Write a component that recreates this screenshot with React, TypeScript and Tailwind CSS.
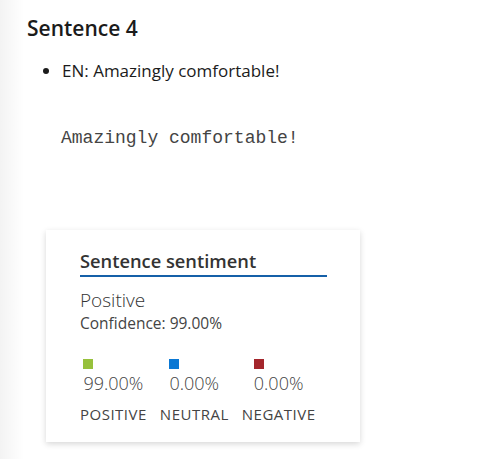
const ui = "font-['Open_Sans','Noto_Sans',sans-serif]";

function Score({ color, value, label }: { color: string; value: string; label: string }) {
  return (
    <div className="flex flex-col items-center">
      <div className="flex flex-col items-start">
        <div className={`w-[10px] h-[10px] ${color}`} />
        <div className="mt-[2px] text-[18px] leading-[24px] font-light text-[#444]">{value}</div>
      </div>
      <div className="mt-[9px] text-[15px] leading-[20px] tracking-[0.5px] text-[#444] uppercase">{label}</div>
    </div>
  );
}

export default function App() {
  return (
    <div className={`${ui} min-h-[459px] w-[495px] bg-white relative`}>
      <div className="absolute left-0 top-0 bottom-0 w-[24px] bg-gradient-to-r from-[#f3f3f3] to-white" />
      <div className="relative pl-[27px] pt-[14px]">
        <h2 className="text-[21px] leading-[28px] font-semibold text-[#1b1b1b]">Sentence 4</h2>
        <ul className="mt-[18px] pl-[35px] list-disc text-[17px] leading-[22px] text-[#1b1b1b]">
          <li>EN: Amazingly comfortable!</li>
        </ul>
        <pre className="mt-[44px] pl-[34px] font-['Liberation_Mono',monospace] text-[18px] leading-[24px] text-[#444]">
          Amazingly comfortable!
        </pre>
        <div className="mt-[80px] ml-[19px] w-[314px] bg-white shadow-[0_2px_6px_rgba(0,0,0,0.16)] pl-[34px] pr-[33px] pt-[20px] pb-[18px]">
          <div className="border-b-2 border-[#1560a8] pb-[3px] text-[18.3px] leading-[22px] font-semibold text-[#333]">
            Sentence sentiment
          </div>
          <div className="mt-[12px] text-[19px] leading-[22px] font-light text-[#333]">Positive</div>
          <div className="mt-[2px] text-[15.5px] leading-[20px] text-[#444]">Confidence: 99.00%</div>
          <div className="mt-[26px] flex gap-[13px]">
            <Score color="bg-[#97c13c]" value="99.00%" label="Positive" />
            <Score color="bg-[#0a78d4]" value="0.00%" label="Neutral" />
            <Score color="bg-[#a4262c]" value="0.00%" label="Negative" />
          </div>
        </div>
      </div>
    </div>
  );
}
